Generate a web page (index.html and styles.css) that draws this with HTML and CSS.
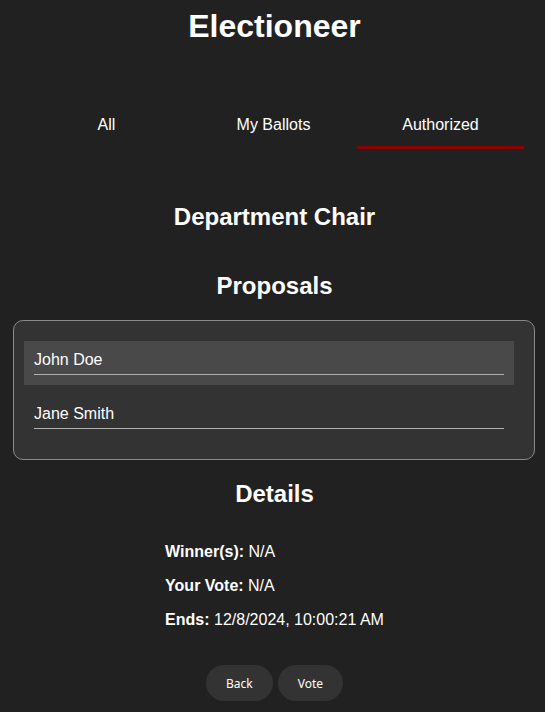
FILE: index.html
```html
<!DOCTYPE html>
<html>
<head>
<meta charset="utf-8">
<link rel="stylesheet" href="styles.css">
</head>
<body>
<h1 class="title">Electioneer</h1>
<nav class="tabs">
  <div class="tab">All</div>
  <div class="tab">My Ballots</div>
  <div class="tab active">Authorized</div>
</nav>
<h2 class="heading heading-first">Department Chair</h2>
<h2 class="heading heading-proposals">Proposals</h2>
<div class="proposals">
  <div class="proposal selected"><span class="proposal-name">John Doe</span></div>
  <div class="proposal"><span class="proposal-name">Jane Smith</span></div>
</div>
<h2 class="heading heading-details">Details</h2>
<div class="details-wrap">
  <div class="details">
    <p class="detail"><strong>Winner(s):</strong> N/A</p>
    <p class="detail"><strong>Your Vote:</strong> N/A</p>
    <p class="detail"><strong>Ends:</strong> 12/8/2024, 10:00:21 AM</p>
  </div>
</div>
<div class="actions">
  <button class="btn">Back</button>
  <button class="btn">Vote</button>
</div>
</body>
</html>
```

FILE: styles.css
```css
html, body {
  background: #212121;
}
body {
  margin: 8px 6px 8px 10px;
  color: #ffffff;
  font-family: "Liberation Sans", Arial, sans-serif;
  font-size: 16px;
}
.title {
  margin: 0;
  font-size: 32px;
  line-height: 36px;
  text-align: center;
  font-weight: bold;
}
.tabs {
  display: flex;
  margin: 58px 15px 0 13px;
}
.tab {
  flex: 1;
  text-align: center;
  padding: 14px 0 12px;
  line-height: 18px;
  border-bottom: 3px solid transparent;
}
.tab.active {
  border-bottom-color: #8b0000;
}
.heading {
  margin: 0;
  font-size: 24px;
  line-height: 28px;
  text-align: center;
  font-weight: bold;
}
.heading-first {
  margin-top: 54px;
}
.heading-proposals {
  margin-top: 41px;
}
.proposals {
  margin: 20px 4px 0 3px;
  background: #333333;
  border: 1px solid #8a8a8a;
  border-radius: 10px;
  padding: 20px 20px 20px 10px;
  display: flex;
  flex-direction: column;
  gap: 10px;
}
.proposal {
  padding: 10px;
}
.proposal.selected {
  background: #494949;
}
.proposal-name {
  display: block;
  line-height: 18px;
  padding-bottom: 5px;
  border-bottom: 1px solid #b0b0b0;
}
.heading-details {
  margin-top: 20px;
}
.details-wrap {
  display: flex;
  justify-content: center;
  margin-top: 35px;
}
.details {
  display: flex;
  flex-direction: column;
  gap: 16px;
}
.detail {
  margin: 0;
  line-height: 18px;
}
.actions {
  display: flex;
  justify-content: center;
  gap: 5px;
  margin-top: 36px;
}
.btn {
  background: #333333;
  color: #ffffff;
  border: none;
  border-radius: 18px;
  height: 36px;
  padding: 0 20px;
  font-family: "Noto Sans", "Open Sans", sans-serif;
  font-size: 12px;
}
```
